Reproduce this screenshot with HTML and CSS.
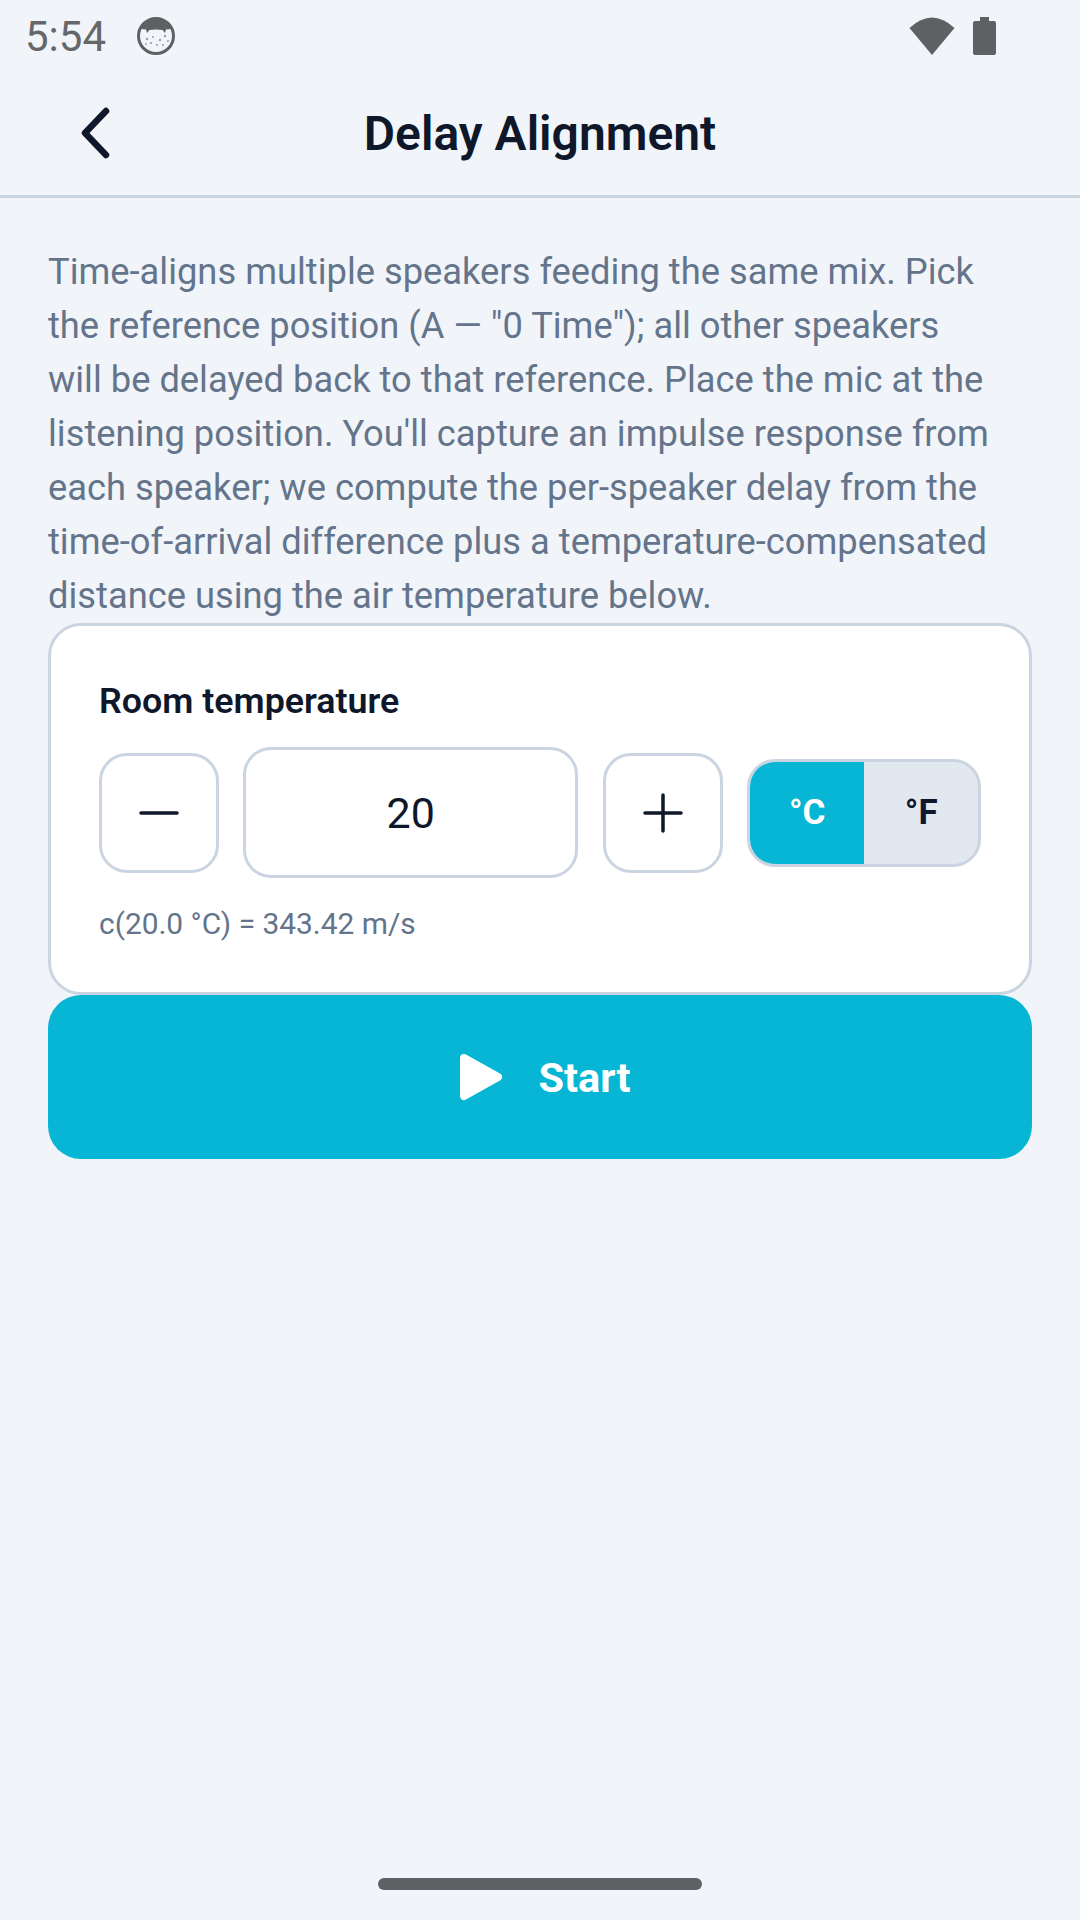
FILE: index.html
```html
<!DOCTYPE html>
<html lang="en">
<head>
<meta charset="utf-8">
<title>Delay Alignment</title>
<link rel="stylesheet" href="styles.css">
</head>
<body>
<div class="screen">
  <div class="status">
    <span class="time">5:54</span>
    <svg class="cat" width="40" height="40" viewBox="0 0 40 40">
      <circle cx="20" cy="20" r="17.5" fill="#f1f5f9" stroke="#5f6063" stroke-width="3"/>
      <path d="M5 13 C8 5 14 2 20 2 C26 2 32 5 35 13 L30 13.500 L29 17 L26.500 14 Q20 13 13.500 14 L11 17 L10 13.500 Z" fill="#5f6063"/>
      <g fill="#9a9da1">
        <circle cx="11" cy="23" r="1.2"/><circle cx="17" cy="21" r="1"/><circle cx="24" cy="24" r="1.2"/>
        <circle cx="29" cy="20" r="1.2"/><circle cx="15" cy="27" r="1.1"/><circle cx="21" cy="29" r="1"/>
        <circle cx="27" cy="29" r="1"/><circle cx="32" cy="25" r="1"/><circle cx="10" cy="28" r="0.9"/>
      </g>
    </svg>
    <span class="status-right">
      <svg class="wifi" width="46" height="38" viewBox="0 0 46 38"><path d="M0.5 11 Q23 -10 45.500 11 L23 38 Z" fill="#5f6063"/></svg>
      <svg class="battery" width="23" height="38" viewBox="0 0 23 38"><path d="M7 0 H16 V4 H21 Q23 4 23 6 V36 Q23 38 21 38 H2 Q0 38 0 36 V6 Q0 4 2 4 H7 Z" fill="#5f6063"/></svg>
    </span>
  </div>
  <header class="topbar">
    <svg class="back" width="34" height="56" viewBox="0 0 34 56"><path d="M27 6 L6 28 L27 50" fill="none" stroke="#0f172a" stroke-width="6.500" stroke-linecap="round" stroke-linejoin="round"/></svg>
    <h1 class="title">Delay Alignment</h1>
  </header>
  <main class="content">
    <p class="desc">Time-aligns multiple speakers feeding the same mix. Pick the reference position (A — "0 Time"); all other speakers<br>will be delayed back to that reference. Place the mic at the listening position. You'll capture an impulse response from each speaker; we compute the per-speaker delay from the time-of-arrival difference plus a temperature-compensated distance using the air temperature below.</p>
    <section class="card">
      <div class="label">Room temperature</div>
      <div class="row">
        <div class="step">
          <svg width="40" height="40" viewBox="0 0 40 40"><path d="M2 20 H38" stroke="#0f172a" stroke-width="3.500" stroke-linecap="round"/></svg>
        </div>
        <div class="value">20</div>
        <div class="step">
          <svg width="40" height="40" viewBox="0 0 40 40"><path d="M2 20 H38 M20 2 V38" stroke="#0f172a" stroke-width="3.500" stroke-linecap="round"/></svg>
        </div>
        <div class="unit">
          <div class="unit-opt on">°C</div>
          <div class="unit-opt">°F</div>
        </div>
      </div>
      <div class="note">c(20.0 °C) = 343.42 m/s</div>
    </section>
    <button class="start" type="button">
      <svg width="53" height="48" viewBox="0 0 53 48"><path d="M15 5 L49 24 L15 43 Z" fill="#fff" stroke="#fff" stroke-width="8" stroke-linejoin="round"/></svg>
      <span>Start</span>
    </button>
  </main>
  <div class="home"></div>
</div>
</body>
</html>
```
FILE: styles.css
```css
* { box-sizing: border-box; }
html, body { margin: 0; padding: 0; }
body { background: #f1f5f9; font-family: Roboto, "Liberation Sans", sans-serif; color: #0f172a; }
.screen { width: 1080px; height: 1920px; display: flex; flex-direction: column; overflow: hidden; }
.status { height: 72px; display: flex; align-items: center; padding-left: 25px; flex: none; }
.time { font-size: 42px; color: #666769; line-height: 72px; padding-top: 2px; }
.cat { margin-left: 30px; }
.status-right { margin-left: auto; margin-right: 84px; display: flex; align-items: center; gap: 18px; }
.topbar { height: 126px; flex: none; border-bottom: 3px solid #cbd5e1; position: relative; display: flex; align-items: center; justify-content: center; }
.back { position: absolute; left: 79px; top: 33px; }
.title { margin: 0; font-size: 48px; font-weight: 600; line-height: 58px; padding-top: 1px; }
.content { padding: 47px 48px 0; display: flex; flex-direction: column; }
.desc { margin: 0; font-size: 36.3px; line-height: 54px; color: #64748b; }
.card { height: 372px; background: #fff; border: 3px solid #cbd5e1; border-radius: 33px; padding: 48px; }
.label { font-size: 35.8px; font-weight: 600; line-height: 54px; }
.row { margin-top: 19px; height: 131px; display: flex; align-items: center; gap: 24.75px; }
.step { width: 119.5px; height: 120px; flex: none; background: #fff; border: 3px solid #cbd5e1; border-radius: 28px; display: flex; align-items: center; justify-content: center; }
.value { width: 335px; height: 131px; flex: none; border: 3px solid #cbd5e1; border-radius: 28px; display: flex; align-items: center; justify-content: center; font-size: 43px; }
.unit { width: 234px; height: 108px; flex: none; display: flex; border: 3px solid #cbd5e1; border-radius: 28px; overflow: hidden; background: #e2e8f0; }
.unit-opt { flex: 1; display: flex; align-items: center; justify-content: center; font-size: 35px; font-weight: 700; }
.unit-opt.on { background: #06b6d4; color: #fff; }
.note { margin-top: 27px; font-size: 29.9px; line-height: 38px; color: #64748b; }
.start { height: 164px; border: 0; border-radius: 33px; background: #06b6d4; color: #fff; display: flex; align-items: center; justify-content: center; gap: 36px; font-family: inherit; font-size: 41.5px; font-weight: 700; padding: 0; }
.home { width: 324px; height: 12px; border-radius: 6px; background: #5f6063; margin: auto auto 30px; flex: none; }
```
